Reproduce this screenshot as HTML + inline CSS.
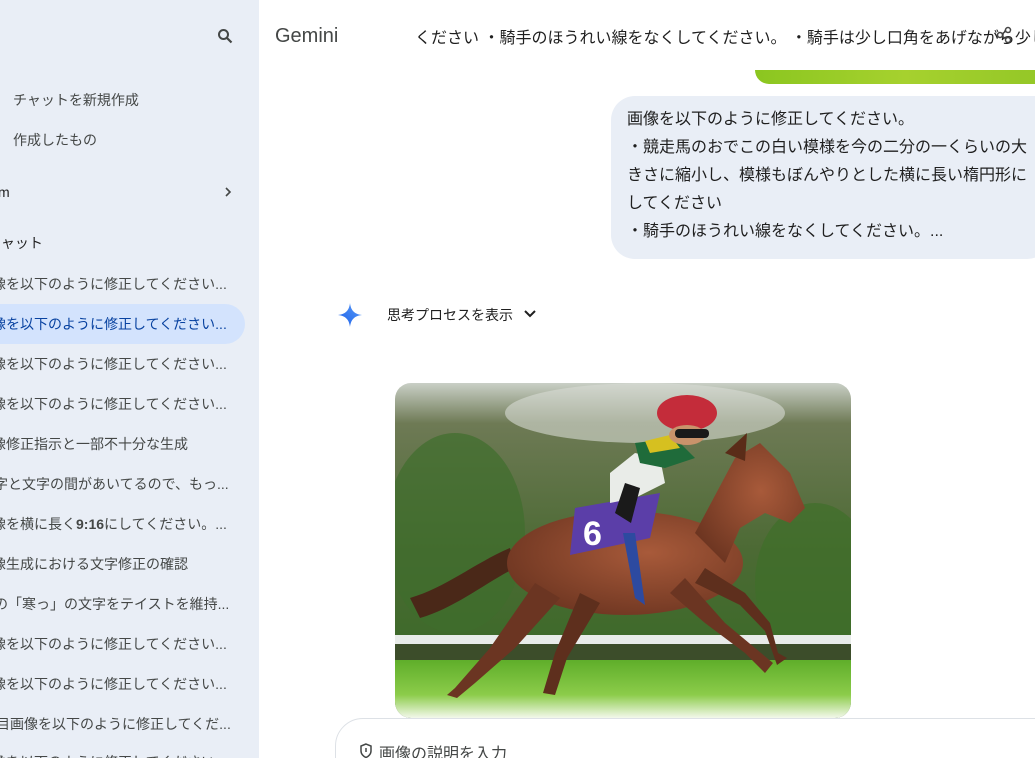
<!DOCTYPE html>
<html><head><meta charset="utf-8"><style>
*{margin:0;padding:0;box-sizing:border-box}
body{width:1035px;height:758px;overflow:hidden;position:relative;background:#fff;font-family:"Liberation Sans","Noto Sans CJK JP",sans-serif;color:#1f1f1f}
.sb{position:absolute;left:0;top:0;width:259px;height:758px;background:#e9eef6;overflow:hidden}
.t{position:absolute;white-space:nowrap;font-size:14px;color:#444746;line-height:20px}
.it{position:absolute;left:-22px;white-space:nowrap;font-size:14px;color:#444746;line-height:20px}
.hl{position:absolute;left:-20px;top:304px;width:265px;height:40px;border-radius:20px;background:#d3e3fd}
.main{position:absolute;left:259px;top:0;width:776px;height:758px;overflow:hidden}
</style></head><body>
<div class="sb">
<svg style="position:absolute;left:217px;top:28px" width="16" height="16" viewBox="0 0 16 16"><circle cx="6.5" cy="6.5" r="4.5" fill="none" stroke="#444746" stroke-width="2"/><path d="M10 10l4.5 4.5" stroke="#444746" stroke-width="2.2"/></svg>
<div class="t" style="left:13px;top:90px">チャットを新規作成</div>
<div class="t" style="left:13px;top:130px">作成したもの</div>
<div class="t" style="left:-2px;top:182px;color:#1f1f1f">m</div>
<svg style="position:absolute;left:223px;top:186px" width="10" height="12" viewBox="0 0 10 12"><path d="M3 2l4 4-4 4" fill="none" stroke="#444746" stroke-width="1.6"/></svg>
<div class="t" style="left:-13px;top:233px;color:#1f1f1f">チャット</div>
<div class="hl"></div>
<div class="it" style="top:274px">画像を以下のように修正してください...</div>
<div class="it" style="top:314px;color:#0842a0">画像を以下のように修正してください...</div>
<div class="it" style="top:354px">画像を以下のように修正してください...</div>
<div class="it" style="top:394px">画像を以下のように修正してください...</div>
<div class="it" style="top:434px">画像修正指示と一部不十分な生成</div>
<div class="it" style="top:474px;left:-20px">文字と文字の間があいてるので、もっ...</div>
<div class="it" style="top:514px">画像を横に長く<b>9:16</b>にしてください。...</div>
<div class="it" style="top:554px">画像生成における文字修正の確認</div>
<div class="it" style="top:594px;left:-34px">文字の「寒っ」の文字をテイストを維持...</div>
<div class="it" style="top:634px">画像を以下のように修正してください...</div>
<div class="it" style="top:674px">画像を以下のように修正してください...</div>
<div class="it" style="top:714px;left:-18px">枚目画像を以下のように修正してくだ...</div>
<div class="it" style="top:752px">画像を以下のように修正してください...</div>
</div>
<div class="main">
<div style="position:absolute;left:16px;top:25px;font-size:20px;color:#444746">Gemini</div>
<div style="position:absolute;left:156px;top:24px;font-size:16px;white-space:nowrap;color:#1f1f1f">ください ・騎手のほうれい線をなくしてください。 ・騎手は少し口角をあげながら少し</div>
<svg style="position:absolute;left:736px;top:26px" width="18" height="18" viewBox="0 0 18 18"><circle cx="13" cy="4" r="2.5" fill="#fff" stroke="#444" stroke-width="1.5"/><circle cx="5" cy="9" r="2.5" fill="#fff" stroke="#444" stroke-width="1.5"/><circle cx="13" cy="14" r="2.5" fill="#fff" stroke="#444" stroke-width="1.5"/><path d="M7 8l4-3M7 10l4 3" stroke="#444" stroke-width="1.5"/></svg>
<div style="position:absolute;left:496px;top:70px;width:300px;height:14px;border-radius:0 0 0 14px;background:linear-gradient(90deg,#8bc620,#a6d12e,#92c626)"></div>
<div style="position:absolute;left:352px;top:96px;width:440px;height:163px;border-radius:24px 0 24px 24px;background:#e9eef6"></div>
<div style="position:absolute;left:368px;top:106px;font-size:16px;line-height:28px;white-space:nowrap;color:#1f1f1f">画像を以下のように修正してください。<br>・競走馬のおでこの白い模様を今の二分の一くらいの大<br>きさに縮小し、模様もぼんやりとした横に長い楕円形に<br>してください<br>・騎手のほうれい線をなくしてください。...</div>
<svg style="position:absolute;left:79px;top:303px" width="24" height="24" viewBox="0 0 24 24"><defs><linearGradient id="g" x1="0" y1="1" x2="1" y2="0"><stop offset="0" stop-color="#1a5fe8"/><stop offset="1" stop-color="#5b9cf8"/></linearGradient></defs><path d="M12 0C12.8 6.5 15.5 11 24 12 15.5 13 12.8 17.5 12 24 11.2 17.5 8.5 13 0 12 8.5 11 11.2 6.5 12 0Z" fill="url(#g)"/></svg>
<div style="position:absolute;left:128px;top:305px;font-size:14px;color:#1f1f1f">思考プロセスを表示</div>
<svg style="position:absolute;left:264px;top:309px" width="14" height="10" viewBox="0 0 14 10"><path d="M2 2l5 5 5-5" fill="none" stroke="#1f1f1f" stroke-width="2"/></svg>
<svg style="position:absolute;left:136px;top:383px;border-radius:16px" width="456" height="335" viewBox="0 0 456 335">
<defs>
<linearGradient id="bg" x1="0" y1="0" x2="0" y2="1"><stop offset="0" stop-color="#c9cfc6"/><stop offset=".12" stop-color="#6e7a55"/><stop offset=".5" stop-color="#4c6a34"/><stop offset=".75" stop-color="#3f6a2b"/></linearGradient>
<linearGradient id="gr" x1="0" y1="0" x2="0" y2="1"><stop offset="0" stop-color="#5fae2a"/><stop offset=".6" stop-color="#8ccc4a"/><stop offset="1" stop-color="#f3f8ec"/></linearGradient>
<radialGradient id="hb" cx=".6" cy=".4" r=".7"><stop offset="0" stop-color="#a85a3a"/><stop offset="1" stop-color="#6b3420"/></radialGradient>
</defs>
<rect width="456" height="335" fill="url(#bg)"/>
<ellipse cx="60" cy="150" rx="70" ry="100" fill="#3f6d2c" opacity=".7"/>
<ellipse cx="420" cy="200" rx="60" ry="80" fill="#3e6f2a" opacity=".7"/>
<ellipse cx="250" cy="30" rx="140" ry="30" fill="#d9dcd6" opacity=".6"/>
<rect x="0" y="252" width="456" height="9" fill="#e8ece9"/>
<rect x="0" y="261" width="456" height="18" fill="#3c4d2a"/>
<rect x="0" y="277" width="456" height="58" fill="url(#gr)"/>
<path d="M15 215C50 205 80 180 115 165L120 185C90 200 60 225 25 235Z" fill="#4a2818"/>
<ellipse cx="230" cy="180" rx="118" ry="52" fill="url(#hb)"/>
<path d="M300 150L340 75 365 60 395 90 410 125 395 140 370 130 345 145 330 180Z" fill="url(#hb)"/>
<path d="M330 70L352 50 350 78Z" fill="#5a2c18"/>
<path d="M140 200L95 265 60 305 52 312 62 315 80 300 120 265 165 215Z" fill="#6b3522"/>
<path d="M185 210L160 270 148 310 160 312 172 275 205 220Z" fill="#5e2f1d"/>
<path d="M290 195L330 240 360 265 378 280 370 290 350 270 310 240 275 210Z" fill="#6b3522"/>
<path d="M310 185L350 210 375 240 383 270 392 275 382 282 370 248 345 222 300 200Z" fill="#5e2f1d"/>
<path d="M180 125L265 110 255 155 175 172Z" fill="#5b3ea8"/>
<text x="188" y="162" font-size="34" fill="#fff" font-family="Liberation Sans" font-weight="bold">6</text>
<path d="M228 150L240 215 250 222 240 150Z" fill="#2d4aa0"/>
<path d="M215 90L240 70 265 75 270 100 240 115 215 120Z" fill="#e9ece8"/>
<path d="M240 60L280 55 300 75 270 85 245 80Z" fill="#1f6b3a"/>
<path d="M250 58L275 52 285 65 255 70Z" fill="#d6c020"/>
<ellipse cx="292" cy="30" rx="30" ry="18" fill="#c42c3a"/>
<ellipse cx="292" cy="52" rx="18" ry="10" fill="#c9936b"/>
<rect x="280" y="46" width="34" height="9" rx="4" fill="#1a1a1a"/>
<path d="M220 130L230 100 245 105 236 140Z" fill="#1a1a1a"/>
</svg>
<div style="position:absolute;left:76px;top:718px;width:740px;height:60px;border:1px solid #dde1e6;border-radius:28px 0 0 0;background:#fff"></div>
<svg style="position:absolute;left:100px;top:743px" width="14" height="16" viewBox="0 0 14 16"><path d="M7 1L2 3v5c0 3 2.5 5.5 5 6.5 2.5-1 5-3.5 5-6.5V3Z" fill="none" stroke="#444746" stroke-width="1.5"/><path d="M7 5v4" stroke="#444746" stroke-width="1.5"/></svg>
<div style="position:absolute;left:120px;top:740px;font-size:16px;color:#444746;white-space:nowrap">画像の説明を入力</div>
</div>
</body></html>
